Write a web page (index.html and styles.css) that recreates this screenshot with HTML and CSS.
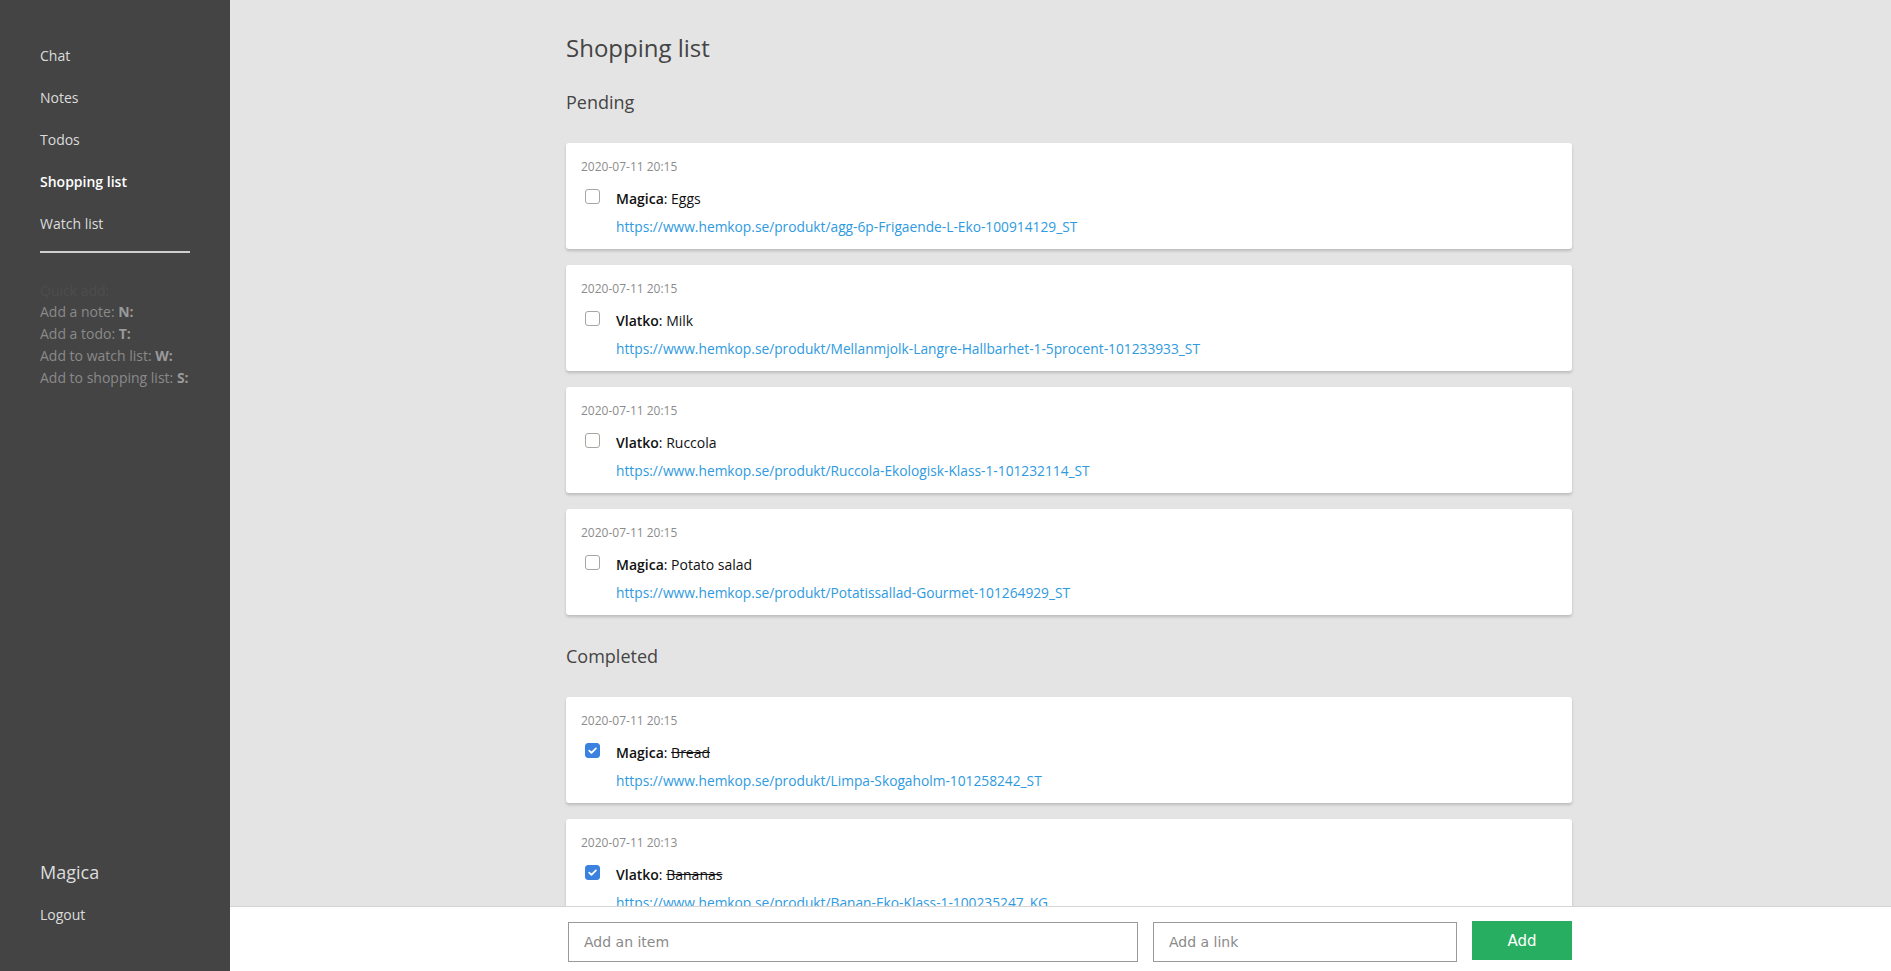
FILE: index.html
```html
<!DOCTYPE html>
<html lang="en">
<head>
<meta charset="utf-8">
<title>Shopping list</title>
<link rel="stylesheet" href="styles.css">
</head>
<body>
<div class="app">
  <aside class="sidebar">
    <nav class="nav">
      <a class="nav-item">Chat</a>
      <a class="nav-item">Notes</a>
      <a class="nav-item">Todos</a>
      <a class="nav-item active">Shopping list</a>
      <a class="nav-item">Watch list</a>
    </nav>
    <div class="divider"></div>
    <div class="shortcuts">
      <div class="hint">Quick add:</div>
      <div>Add a note: <b>N:</b></div>
      <div>Add a todo: <b>T:</b></div>
      <div>Add to watch list: <b>W:</b></div>
      <div>Add to shopping list: <b>S:</b></div>
    </div>
    <div class="user">
      <div class="user-name">Magica</div>
      <a class="logout">Logout</a>
    </div>
  </aside>
  <main class="main">
    <div class="scroll">
      <div class="container">
        <h1 class="title">Shopping list</h1>
        <h2 class="section">Pending</h2>
        <div class="list">
          <div class="card">
            <div class="date">2020-07-11 20:15</div>
            <div class="row">
              <span class="box"></span>
              <div class="body">
                <div class="line"><b class="who">Magica</b>: <span>Eggs</span></div>
                <a class="link">https://www.hemkop.se/produkt/agg-6p-Frigaende-L-Eko-100914129_ST</a>
              </div>
            </div>
          </div>
          <div class="card">
            <div class="date">2020-07-11 20:15</div>
            <div class="row">
              <span class="box"></span>
              <div class="body">
                <div class="line"><b class="who">Vlatko</b>: <span>Milk</span></div>
                <a class="link">https://www.hemkop.se/produkt/Mellanmjolk-Langre-Hallbarhet-1-5procent-101233933_ST</a>
              </div>
            </div>
          </div>
          <div class="card">
            <div class="date">2020-07-11 20:15</div>
            <div class="row">
              <span class="box"></span>
              <div class="body">
                <div class="line"><b class="who">Vlatko</b>: <span>Ruccola</span></div>
                <a class="link">https://www.hemkop.se/produkt/Ruccola-Ekologisk-Klass-1-101232114_ST</a>
              </div>
            </div>
          </div>
          <div class="card">
            <div class="date">2020-07-11 20:15</div>
            <div class="row">
              <span class="box"></span>
              <div class="body">
                <div class="line"><b class="who">Magica</b>: <span>Potato salad</span></div>
                <a class="link">https://www.hemkop.se/produkt/Potatissallad-Gourmet-101264929_ST</a>
              </div>
            </div>
          </div>
        </div>
        <h2 class="section">Completed</h2>
        <div class="list">
          <div class="card">
            <div class="date">2020-07-11 20:15</div>
            <div class="row">
              <span class="box checked"><svg viewBox="0 0 16 16" width="16" height="16"><path d="M4 8.2l2.7 2.7L12.2 5.4" fill="none" stroke="#fff" stroke-width="2.2" stroke-linecap="round" stroke-linejoin="round"/></svg></span>
              <div class="body">
                <div class="line"><b class="who">Magica</b>: <span class="done">Bread</span></div>
                <a class="link">https://www.hemkop.se/produkt/Limpa-Skogaholm-101258242_ST</a>
              </div>
            </div>
          </div>
          <div class="card">
            <div class="date">2020-07-11 20:13</div>
            <div class="row">
              <span class="box checked"><svg viewBox="0 0 16 16" width="16" height="16"><path d="M4 8.2l2.7 2.7L12.2 5.4" fill="none" stroke="#fff" stroke-width="2.2" stroke-linecap="round" stroke-linejoin="round"/></svg></span>
              <div class="body">
                <div class="line"><b class="who">Vlatko</b>: <span class="done">Bananas</span></div>
                <a class="link">https://www.hemkop.se/produkt/Banan-Eko-Klass-1-100235247_KG</a>
              </div>
            </div>
          </div>
        </div>
      </div>
    </div>
    <div class="composer">
      <div class="container composer-inner">
        <input class="field" type="text" placeholder="Add an item">
        <input class="field" type="text" placeholder="Add a link">
        <button class="add-btn">Add</button>
      </div>
    </div>
  </main>
</div>
</body>
</html>
```

FILE: styles.css
```css
* { box-sizing: border-box; }
html, body { margin: 0; padding: 0; height: 100%; }
body {
  font-family: "Open Sans", "Noto Sans", "DejaVu Sans", sans-serif;
  font-size: 14px;
  color: #222;
  overflow: hidden;
}
.app {
  display: flex;
  height: 100vh;
}
.sidebar {
  width: 230px;
  flex: 0 0 230px;
  background: #444444;
  padding: 35px 40px 46px;
  display: flex;
  flex-direction: column;
  color: #dddddd;
}
.nav { display: flex; flex-direction: column; }
.nav-item {
  display: block;
  padding: 11px 0;
  line-height: 20px;
  font-size: 14px;
  color: #dcdcdc;
  text-decoration: none;
}
.nav-item.active { color: #ffffff; font-weight: 600; }
.divider {
  margin-top: 6px;
  height: 2px;
  background: #cfcfcf;
}
.shortcuts {
  margin-top: 27px;
  font-size: 14px;
  line-height: 22px;
  color: #8a8a8a;
}
.shortcuts b { color: #9a9a9a; font-weight: 700; }
.shortcuts .hint { color: #4d4d4d; line-height: 21px; }
.user { margin-top: auto; }
.user-name {
  font-size: 18px;
  line-height: 24px;
  color: #dddddd;
}
.logout {
  display: block;
  margin-top: 21px;
  font-size: 14px;
  line-height: 20px;
  color: #dddddd;
}
.main {
  flex: 1;
  display: flex;
  flex-direction: column;
  background: #e4e4e4;
  min-width: 0;
}
.scroll {
  flex: 1;
  overflow: hidden;
  padding-left: 17px;
}
.container {
  width: 1006px;
  margin: 0 auto;
}
.title {
  margin: 33px 0 0;
  font-size: 24px;
  line-height: 30px;
  font-weight: 400;
  color: #444444;
}
.section {
  margin: 27px 0 29px;
  font-size: 18px;
  line-height: 24px;
  font-weight: 400;
  color: #444444;
}
.list + .section { margin-top: 29px; }
.list {
  display: flex;
  flex-direction: column;
  gap: 16px;
}
.card {
  background: #ffffff;
  border-radius: 3px;
  box-shadow: 0 2px 3px rgba(0, 0, 0, 0.18);
  padding: 16px 15px 12px;
  height: 106px;
}
.date {
  font-size: 12px;
  line-height: 16px;
  color: #8c8c8c;
}
.row {
  display: flex;
  margin-top: 14px;
}
.box {
  width: 15px;
  height: 15px;
  margin-left: 4px;
  margin-right: 16px;
  border: 1px solid #aaa59f;
  border-radius: 3px;
  background: #fff;
  flex: 0 0 15px;
  display: flex;
  align-items: center;
  justify-content: center;
}
.box.checked {
  background: #3b82e0;
  border-color: #3b82e0;
}
.box svg { width: 13px; height: 13px; }
.body { display: flex; flex-direction: column; }
.line {
  font-size: 14px;
  line-height: 20px;
  color: #111111;
}
.who { font-weight: 600; }
.done { text-decoration: line-through; }
.link {
  margin-top: 8px;
  font-size: 13.75px;
  line-height: 20px;
  color: #2e9ae0;
  text-decoration: none;
}
.composer {
  flex: 0 0 65px;
  background: #ffffff;
  border-top: 1px solid #d4d4d4;
  padding: 15px 0 0 17px;
}
.composer-inner {
  display: grid;
  grid-template-columns: 1fr 304px 100px;
  column-gap: 15px;
  padding-left: 2px;
}
.field {
  height: 40px;
  border: 1px solid #9a9a9a;
  padding: 0 15px;
  font-family: "DejaVu Sans", sans-serif;
  font-size: 14px;
  color: #333;
  background: #fff;
  outline: none;
}
.field::placeholder { color: #8a8a8a; }
.add-btn {
  height: 39px;
  margin-top: -1px;
  border: none;
  background: #27ae60;
  color: #ffffff;
  font-family: "DejaVu Sans", sans-serif;
  font-size: 15px;
}
```
